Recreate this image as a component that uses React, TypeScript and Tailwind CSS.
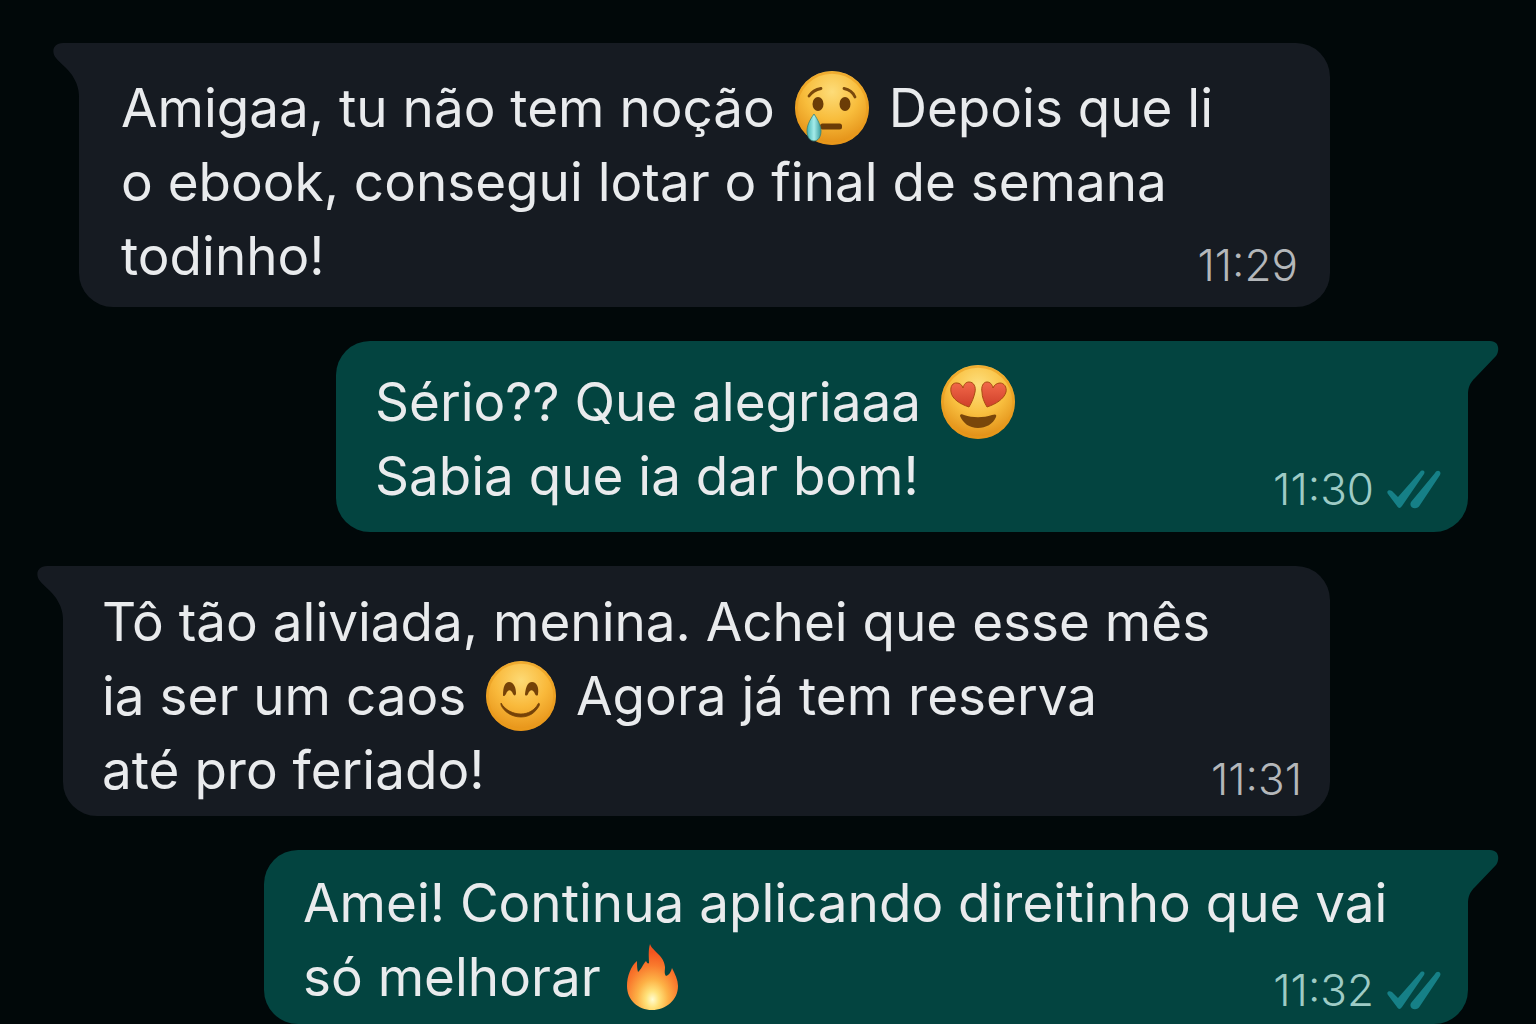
import type { ReactNode } from "react"
import clsx from "clsx"

function CryingFace() {
  return (
    <svg viewBox="0 0 76 76" role="img" aria-label="rosto chorando" className="-mt-5 -mb-2.5 mx-1 inline-block size-19 align-middle">
      <defs>
        <radialGradient id="cry-face" cx="50%" cy="28%" r="75%">
          <stop offset="0" stopColor="#fddc79" />
          <stop offset="0.5" stopColor="#f8bd3c" />
          <stop offset="1" stopColor="#e18a12" />
        </radialGradient>
        <linearGradient id="cry-tear" x1="0" y1="0" x2="1" y2="0">
          <stop offset="0" stopColor="#43b3b4" />
          <stop offset="0.5" stopColor="#a5ecea" />
          <stop offset="1" stopColor="#3a9c9c" />
        </linearGradient>
      </defs>
      <circle cx="38" cy="38" r="37" fill="url(#cry-face)" />
      <circle cx="38" cy="38" r="35.5" fill="none" stroke="#e99b1c" strokeWidth="2.5" opacity="0.6" />
      <g fill="none" stroke="#7a480b" strokeWidth="2.8" strokeLinecap="round">
        <path d="M15 26Q19 20 27 18.500" />
        <path d="M50 18.500Q58 20 61 27" />
      </g>
      <ellipse cx="24" cy="34" rx="5.500" ry="7" fill="#6b3c07" />
      <ellipse cx="51" cy="34" rx="5.500" ry="7" fill="#6b3c07" />
      <rect x="26" y="53.500" width="22" height="6" rx="2.500" fill="#6b3c07" />
      <path d="M20 44C15 51 13 56 13 61C13 67 16 71 20 71C24 71 27 67 27 61C27 56 24 50 20 44Z" fill="url(#cry-tear)" stroke="#398176" strokeWidth="0.8" />
    </svg>
  )
}

function HeartEyesFace() {
  return (
    <svg viewBox="0 0 76 76" role="img" aria-label="olhos de coração" className="-mt-5 -mb-2.5 mx-1 inline-block size-19 align-middle">
      <defs>
        <radialGradient id="love-face" cx="50%" cy="28%" r="75%">
          <stop offset="0" stopColor="#fde07f" />
          <stop offset="0.5" stopColor="#f9c040" />
          <stop offset="1" stopColor="#de8710" />
        </radialGradient>
        <linearGradient id="love-heart" x1="0" y1="0" x2="0" y2="1">
          <stop offset="0" stopColor="#f2694a" />
          <stop offset="1" stopColor="#cf3f2a" />
        </linearGradient>
      </defs>
      <circle cx="38" cy="38" r="37" fill="url(#love-face)" />
      <circle cx="38" cy="38" r="35.500" fill="none" stroke="#e99b1c" strokeWidth="2.500" opacity="0.6" />
      <g fill="url(#love-heart)" stroke="#a94a12" strokeWidth="1">
        <path d="M29 43C20 40 12 35 11 28C10 22 13 18.500 17 19C20 19 22 21 23 24C24 20 26 18 29 18C34 18 36 23 35 28C34 33 32 38 29 43Z" />
        <path d="M47 43C44 38 42 33 42 28C41 23 43 18 47 18C50 18 52 20 53 24C54 21 57 19 60 19C64 19 67 23 66 28C64 35 56 40 47 43Z" />
      </g>
      <path d="M20 52C20 50 22 50 24 51C33 54 43 54 52 51C55 50 57 50 56 53C53 60 46 64 38 64C29 64 23 59 20 52Z" fill="#79460a" />
    </svg>
  )
}

function SmilingFace() {
  return (
    <svg viewBox="0 0 72 72" role="img" aria-label="rosto sorrindo" className="-mt-5 -mb-2.5 mx-1 inline-block size-18 align-middle">
      <defs>
        <radialGradient id="smile-face" cx="50%" cy="28%" r="75%">
          <stop offset="0" stopColor="#fdda75" />
          <stop offset="0.5" stopColor="#f9b93b" />
          <stop offset="1" stopColor="#e58f15" />
        </radialGradient>
      </defs>
      <circle cx="36" cy="36" r="35" fill="url(#smile-face)" />
      <circle cx="36" cy="36" r="33.500" fill="none" stroke="#e99b1c" strokeWidth="2.500" opacity="0.6" />
      <path d="M18 35C18 27 20 22 24 22C29 22 31 28 31 33C31 36 29 36 28 34C26 29 23 29 21 34C20 36 18 37 18 35Z" fill="#754208" />
      <path d="M40 34C41 26 43 22 47 22C52 22 54 28 53 34C53 36 51 36 50 34C48 29 45 29 43 34C42 36 40 36 40 34Z" fill="#754208" />
      <path d="M16 43C20 50 28 54 36 54C43 54 50 50 53 44C54 42 55 44 54 46C50 53 44 57 36 57C27 57 19 52 16 45Z" fill="#754208" stroke="#754208" strokeWidth="0.8" strokeLinejoin="round" />
    </svg>
  )
}

function Fire() {
  return (
    <svg viewBox="0 0 52 68" role="img" aria-label="fogo" className="-mt-5 -mb-2.5 ml-2.5 inline-block h-17 w-13 align-middle">
      <defs>
        <radialGradient id="flame" cx="50%" cy="84%" r="72%">
          <stop offset="0" stopColor="#fffbd0" />
          <stop offset="0.18" stopColor="#ffe27a" />
          <stop offset="0.42" stopColor="#fdb146" />
          <stop offset="0.72" stopColor="#f97a2d" />
          <stop offset="1" stopColor="#f2541f" />
        </radialGradient>
      </defs>
      <path d="M24 1C26 8 38 12 39 24C39 28 38 30 40 33C43 32 45 29 46 25C49 31 52 37 52 43C52 57 40 67 26 67C12 67 1 57 1 43C1 33 5 23 11 18C11 22 11 26 12 29C15 27 17 21 20 18C21 20 22 21 23 20C23 14 22 8 24 1Z" fill="url(#flame)" />
    </svg>
  )
}

function ReadTicks() {
  return (
    <svg viewBox="0 0 56 40" role="img" aria-label="Lida" className="h-10 w-14" fill="#168087">
      <path d="M2 25C0 22 3 20 6 22L12 28L34 3C36 0 40 2 38 5L16 37C14 40 12 39 11 37Z" />
      <path d="M25 33L49 4C51 0 56 2 54 6L34 36C31 42 22 39 25 33Z" />
    </svg>
  )
}

type BubbleProps = {
  sent?: boolean
  time: string
  className: string
  lines: ReactNode[]
}

function Bubble({ sent = false, time, className, lines }: BubbleProps) {
  return (
    <article
      className={clsx(
        "relative grid rounded-b-[34px]",
        sent ? "rounded-tl-[34px] bg-[#034440]" : "rounded-tr-[34px] bg-[#161b22]",
        className,
      )}
    >
      {sent ? (
        <svg viewBox="0 0 32 54" aria-hidden="true" className="absolute top-0 -right-[31px] h-[54px] w-8" fill="#034440">
          <path d="M0 0H23C32 0 33 9 29 15L8 37C3 42 1 46 1 54H0Z" />
        </svg>
      ) : (
        <svg viewBox="0 0 28 54" aria-hidden="true" className="absolute top-0 -left-[27px] h-[54px] w-7" fill="#161b22">
          <path d="M28 0H11C1 0 -1 9 4 15C8 20 15 25 20 32C25 40 27 46 27 54H28Z" />
        </svg>
      )}
      <p className="col-start-1 row-start-1 text-[53px] leading-[74px] whitespace-nowrap text-[#e9ebed]">
        {lines.map((line, i) => (
          <span key={i} className="block">
            {line}
          </span>
        ))}
      </p>
      <div
        className={clsx(
          "col-start-1 row-start-1 flex items-center gap-3 self-end justify-self-end",
          sent ? "mb-1 text-[#9ecbc5]" : "mb-2 text-[#b4b7ba]",
        )}
      >
        <time className="text-[44px] leading-10 font-light">{time}</time>
        {sent && <ReadTicks />}
      </div>
    </article>
  )
}

export default function App() {
  return (
    <main className="flex h-screen flex-col gap-[34px] overflow-hidden bg-[#010809] pt-[43px] font-['Inter',sans-serif]">
      <Bubble
        time="11:29"
        className="mr-[206px] ml-[79px] pt-7 pr-8 pb-3.5 pl-[42px]"
        lines={[
          <>Amigaa, tu não tem noção <CryingFace /> Depois que li</>,
          "o ebook, consegui lotar o final de semana",
          "todinho!",
        ]}
      />
      <Bubble
        sent
        time="11:30"
        className="mr-[68px] ml-[336px] pt-6 pr-[26px] pb-[19px] pl-[39px]"
        lines={[<>Sério?? Que alegriaaa <HeartEyesFace /></>, "Sabia que ia dar bom!"]}
      />
      <Bubble
        time="11:31"
        className="mr-[206px] ml-[63px] pt-[19px] pr-7 pb-[9px] pl-[39px]"
        lines={[
          "Tô tão aliviada, menina. Achei que esse mês",
          <>ia ser um caos <SmilingFace /> Agora já tem reserva</>,
          "até pro feriado!",
        ]}
      />
      <Bubble
        sent
        time="11:32"
        className="mr-[68px] ml-[264px] pt-4 pr-[26px] pb-2.5 pl-[39px]"
        lines={["Amei! Continua aplicando direitinho que vai", <>só melhorar <Fire /></>]}
      />
    </main>
  )
}
